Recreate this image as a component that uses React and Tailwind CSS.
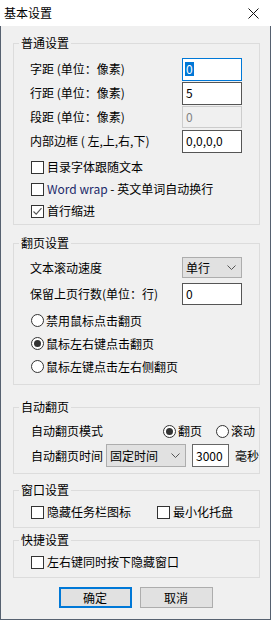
import React from 'react';

const FONT = { fontFamily: '"Noto Sans CJK SC", "Microsoft YaHei", sans-serif' };

function Group({ title, className = '', children }) {
  return (
    <fieldset className={`ml-[12px] w-[247px] border border-[#dcdcdc] ${className}`}>
      <legend className="ml-[5px] px-[2px] h-4 leading-4">{title}</legend>
      {children}
    </fieldset>
  );
}

function Check({ checked, label, className = '' }) {
  return (
    <div className={`flex items-center h-[22px] ${className}`}>
      <span className="w-[13px] h-[13px] border border-[#333] bg-white flex items-center justify-center shrink-0">
        {checked && (
          <svg width="11" height="11" viewBox="0 0 11 11">
            <path d="M1.5 5.5 L4.2 8.2 L9.5 2.2" fill="none" stroke="#555" strokeWidth="1.1" />
          </svg>
        )}
      </span>
      <span className="ml-[3px] whitespace-nowrap">{label}</span>
    </div>
  );
}

function Radio({ checked, label, className = '' }) {
  return (
    <div className={`flex items-center ${className}`}>
      <span className="w-[13px] h-[13px] rounded-full border border-[#333] bg-white flex items-center justify-center shrink-0">
        {checked && <span className="w-[7px] h-[7px] rounded-full bg-[#333]" />}
      </span>
      <span className="ml-[2px] whitespace-nowrap">{label}</span>
    </div>
  );
}

function Chevron() {
  return (
    <svg width="9" height="5" viewBox="0 0 9 5">
      <path d="M0.5 0.5 L4.5 4.5 L8.5 0.5" fill="none" stroke="#555" strokeWidth="1" />
    </svg>
  );
}

export default function App() {
  return (
    <div className="w-[271px] h-[620px] text-[12px] leading-none text-black" style={FONT}>
      {/* title bar */}
      <div className="h-[26px] bg-white flex items-center justify-between pl-[4px] pr-[12px]">
        <span>基本设置</span>
        <svg width="11" height="11" viewBox="0 0 11 11">
          <path d="M0.5 0.5 L10.5 10.5 M10.5 0.5 L0.5 10.5" stroke="#111" strokeWidth="1" />
        </svg>
      </div>

      <div className="h-[594px] bg-[#f0f0f0] border-x border-b border-[#566170] flex flex-col">
        <Group title="普通设置" className="mt-[9px] pb-[2px]">
          <div className="pt-[6px] pl-[16px] pr-[17px]">
            <div className="flex items-center justify-between h-6">
              <span>字距 (单位：像素)</span>
              <div className="w-[60px] h-[23px] border border-[#0078d7] bg-white flex items-center pl-[2px]">
                <span className="bg-[#0078d7] text-white px-[1px] leading-[14px]">0</span>
              </div>
            </div>
            <div className="flex items-center justify-between h-6">
              <span>行距 (单位：像素)</span>
              <div className="w-[60px] h-[23px] border border-[#555] bg-white flex items-center pl-[3px]">5</div>
            </div>
            <div className="flex items-center justify-between h-6">
              <span>段距 (单位：像素)</span>
              <div className="w-[60px] h-[22px] border border-[#cccccc] bg-[#f0f0f0] text-[#838383] flex items-center pl-[3px]">0</div>
            </div>
            <div className="flex items-center justify-between h-6">
              <span>内部边框 ( 左,上,右,下)</span>
              <div className="w-[60px] h-[23px] border border-[#555] bg-white flex items-center pl-[3px]">0,0,0,0</div>
            </div>
          </div>
          <div className="mt-[3px] pl-[17px]">
            <Check label="目录字体跟随文本" />
            <Check label={<><span className="text-[#1c2a6a]">Word wrap</span> - 英文单词自动换行</>} />
            <Check checked label="首行缩进" />
          </div>
        </Group>

        <Group title="翻页设置" className="mt-[10px] pb-[6px]">
          <div className="pt-[6px] pl-[16px] pr-[17px]">
            <div className="flex items-center justify-between h-[21px]">
              <span>文本滚动速度</span>
              <div className="w-[60px] h-[21px] border border-[#adadad] bg-[#e1e1e1] flex items-center justify-between pl-[3px] pr-[5px]">
                <span>单行</span>
                <Chevron />
              </div>
            </div>
            <div className="flex items-center justify-between h-[22px] mt-[5px]">
              <span>保留上页行数(单位：行)</span>
              <div className="w-[60px] h-[22px] border border-[#555] bg-white flex items-center pl-[3px]">0</div>
            </div>
          </div>
          <div className="mt-[4px] pl-[17px]">
            <Radio label="禁用鼠标点击翻页" className="h-[23px]" />
            <Radio checked label="鼠标左右键点击翻页" className="h-[23px]" />
            <Radio label="鼠标左键点击左右侧翻页" className="h-[23px]" />
          </div>
        </Group>

        <Group title="自动翻页" className="mt-[14px] pb-[6px]">
          <div className="pt-[5px] pl-[17px]">
            <div className="flex items-center h-[22px]">
              <span className="w-[132px]">自动翻页模式</span>
              <Radio checked label="翻页" />
              <Radio label="滚动" className="ml-[14px]" />
            </div>
            <div className="flex items-center h-[23px] mt-[2px]">
              <span>自动翻页时间</span>
              <div className="ml-[3px] w-[80px] h-[23px] border border-[#adadad] bg-[#e1e1e1] flex items-center justify-between pl-[3px] pr-[5px]">
                <span>固定时间</span>
                <Chevron />
              </div>
              <div className="ml-[6px] w-[37px] h-[23px] border border-[#666] bg-white flex items-center pl-[3px]">3000</div>
              <span className="ml-[6px]">毫秒</span>
            </div>
          </div>
        </Group>

        <Group title="窗口设置" className="mt-[8px] pb-[4px]">
          <div className="pt-[3px] pl-[17px] flex">
            <Check label="隐藏任务栏图标" className="w-[126px]" />
            <Check label="最小化托盘" />
          </div>
        </Group>

        <Group title="快捷设置" className="mt-[4px] pb-[4px]">
          <div className="pt-[3px] pl-[17px]">
            <Check label="左右键同时按下隐藏窗口" />
          </div>
        </Group>

        <div className="mt-[9px] flex justify-center gap-[8px]">
          <button className="w-[73px] h-[21px] border-2 border-[#0078d7] bg-[#e1e1e1] flex items-center justify-center">确定</button>
          <button className="w-[73px] h-[21px] border border-[#adadad] bg-[#e1e1e1] flex items-center justify-center">取消</button>
        </div>
      </div>
    </div>
  );
}
